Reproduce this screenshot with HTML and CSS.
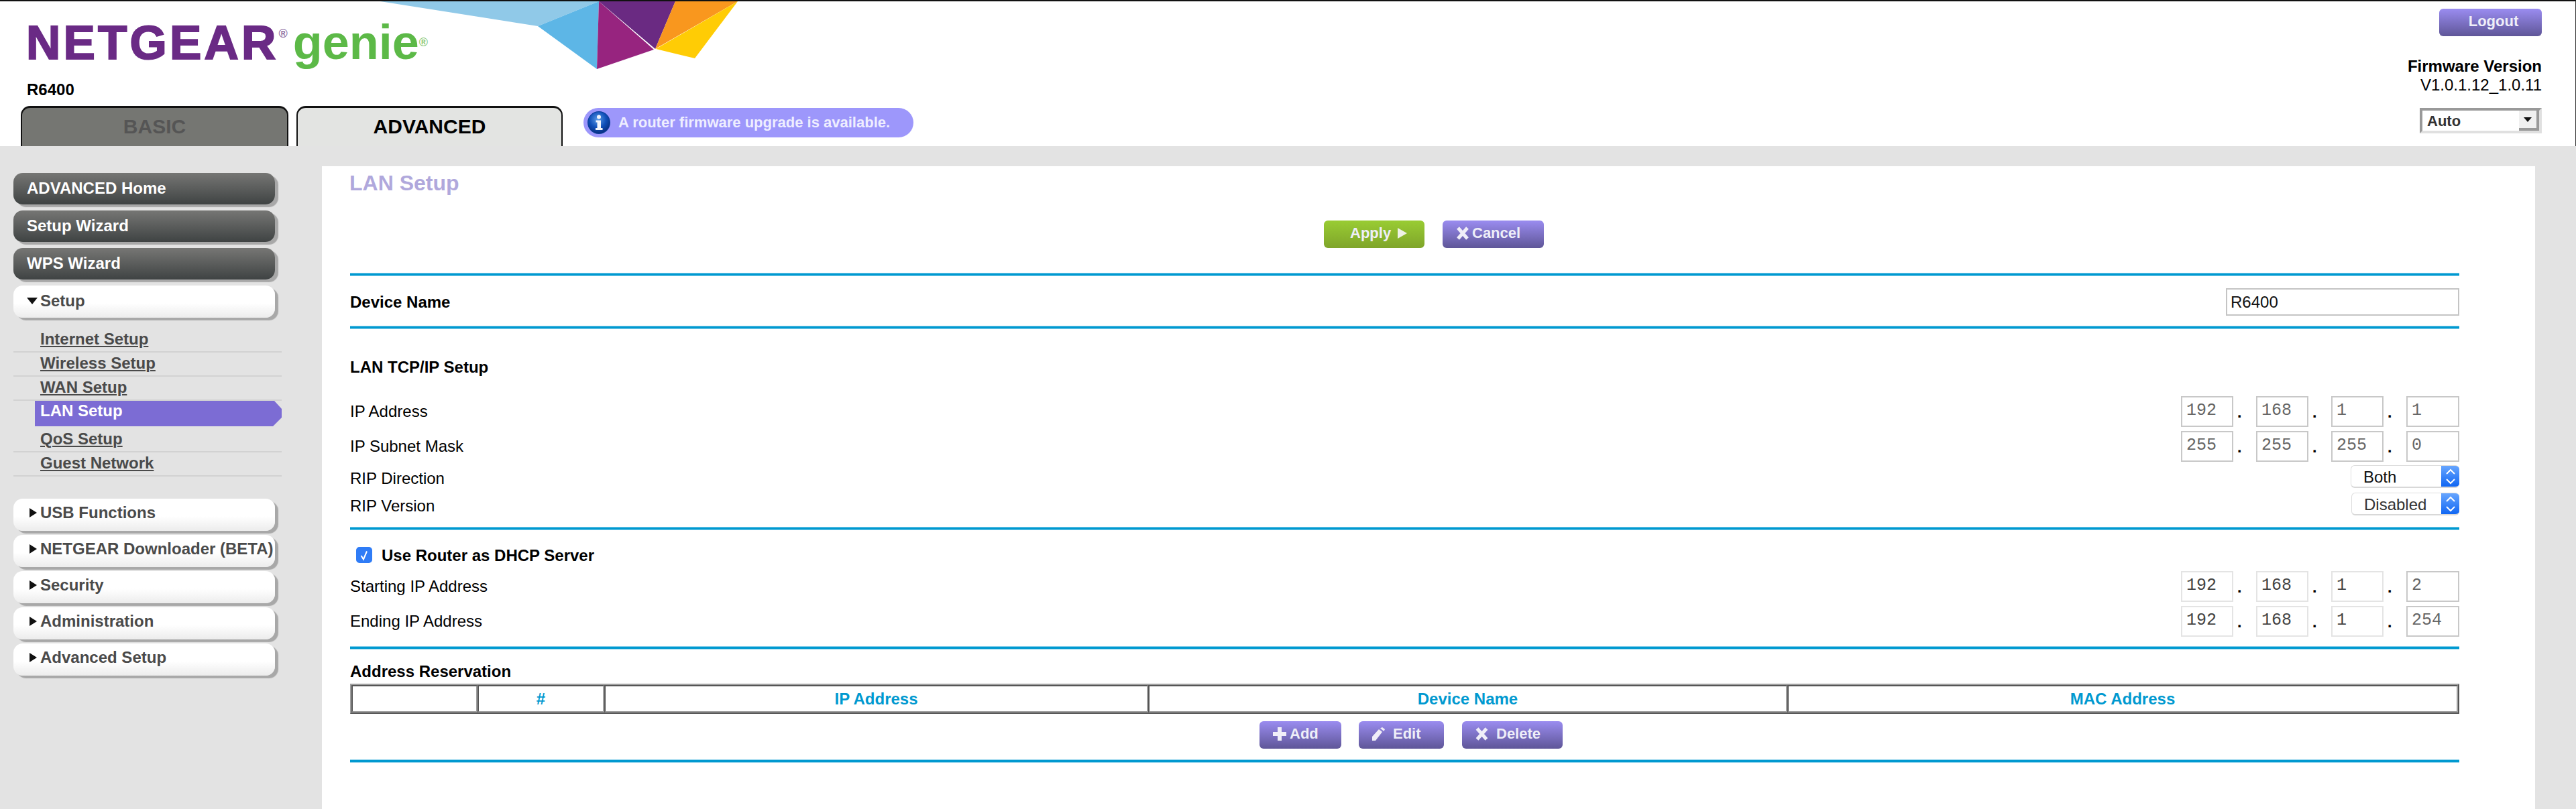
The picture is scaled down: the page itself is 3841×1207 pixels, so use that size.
FILE: index.html
```html
<!DOCTYPE html>
<html lang="en">
<head>
<meta charset="utf-8">
<title>NETGEAR genie - LAN Setup</title>
<link rel="stylesheet" href="styles.css">
</head>
<body>
<header class="header">
  <svg class="shards" width="540" height="104" viewBox="560 0 540 104" aria-hidden="true">
    <polygon fill="#90c9e8" points="567,0 893,0 802,37"/>
    <polygon fill="#5db6e6" points="893,0 802,37 890,101"/>
    <polygon fill="#97247f" points="893,0 975,72 890,101"/>
    <polygon fill="#6a2a82" points="893,0 1007,0 977,71"/>
    <polygon fill="#f9971e" points="1007,0 1100,0 977,71"/>
    <polygon fill="#ffcc05" points="1100,0 1036,85 978,71"/>
  </svg>
  <div class="header-left">
    <div class="logo">
      <span class="logo-netgear">NETGEAR</span><span class="logo-reg logo-reg-purple">®</span>
      <span class="logo-genie">genie</span><span class="logo-reg logo-reg-green">®</span>
    </div>
    <div class="model">R6400</div>
    <div class="tabs">
      <div class="tab tab-basic">BASIC</div>
      <div class="tab tab-advanced">ADVANCED</div>
      <div class="notice">
        <svg class="notice-icon" width="36" height="36" viewBox="0 0 36 36" aria-hidden="true">
          <defs>
            <radialGradient id="infoGrad" cx="45%" cy="35%" r="70%">
              <stop offset="0" stop-color="#5b9be8"/>
              <stop offset="0.55" stop-color="#0f4fb8"/>
              <stop offset="1" stop-color="#062a78"/>
            </radialGradient>
          </defs>
          <circle cx="18" cy="18" r="17" fill="#0b3f9c"/>
          <circle cx="18" cy="18" r="16" fill="url(#infoGrad)"/>
          <circle cx="18" cy="9.5" r="3" fill="#f2f5fb"/>
          <path d="M13.5 14.5h7.5v11.5h2.5v3h-10.5v-3h2.5v-8.500h-2z" fill="#f2f5fb"/>
        </svg>
        <span>A router firmware upgrade is available.</span>
      </div>
    </div>
  </div>
  <div class="header-right">
    <button class="btn btn-purple btn-logout" type="button">Logout</button>
    <div class="fw-title">Firmware Version</div>
    <div class="fw-version">V1.0.1.12_1.0.11</div>
    <div class="lang-select">
      <span>Auto</span>
      <span class="lang-arrow"><svg width="12" height="7" viewBox="0 0 12 7" aria-hidden="true"><polygon points="0,0 12,0 6,7" fill="#111"/></svg></span>
    </div>
  </div>
</header>

<div class="layout">
  <nav class="sidebar">
    <a class="nav-dark">ADVANCED Home</a>
    <a class="nav-dark">Setup Wizard</a>
    <a class="nav-dark">WPS Wizard</a>
    <a class="nav-light nav-open"><svg class="arrow-down" width="16" height="10" viewBox="0 0 16 10" aria-hidden="true"><polygon points="0,0 16,0 8,10" fill="#111"/></svg>Setup</a>
    <ul class="subnav">
      <li class="sub-item"><a>Internet Setup</a></li>
      <li class="sub-item"><a>Wireless Setup</a></li>
      <li class="sub-item"><a>WAN Setup</a></li>
      <li class="sub-active">LAN Setup</li>
      <li class="sub-item sub-after-active"><a>QoS Setup</a></li>
      <li class="sub-item"><a>Guest Network</a></li>
    </ul>
    <div class="nav-group">
      <a class="nav-light"><svg class="arrow-right" width="11" height="14" viewBox="0 0 11 14" aria-hidden="true"><polygon points="0,0 11,7 0,14" fill="#111"/></svg>USB Functions</a>
      <a class="nav-light"><svg class="arrow-right" width="11" height="14" viewBox="0 0 11 14" aria-hidden="true"><polygon points="0,0 11,7 0,14" fill="#111"/></svg>NETGEAR Downloader (BETA)</a>
      <a class="nav-light"><svg class="arrow-right" width="11" height="14" viewBox="0 0 11 14" aria-hidden="true"><polygon points="0,0 11,7 0,14" fill="#111"/></svg>Security</a>
      <a class="nav-light"><svg class="arrow-right" width="11" height="14" viewBox="0 0 11 14" aria-hidden="true"><polygon points="0,0 11,7 0,14" fill="#111"/></svg>Administration</a>
      <a class="nav-light"><svg class="arrow-right" width="11" height="14" viewBox="0 0 11 14" aria-hidden="true"><polygon points="0,0 11,7 0,14" fill="#111"/></svg>Advanced Setup</a>
    </div>
  </nav>

  <main class="panel">
    <h1 class="title">LAN Setup</h1>
    <div class="actions actions-top">
      <button class="btn btn-green btn-apply" type="button">Apply<svg width="14" height="16" viewBox="0 0 14 16" aria-hidden="true"><polygon points="0,0 14,8 0,16" fill="#eef2e6"/></svg></button>
      <button class="btn btn-purple btn-cancel" type="button"><svg width="20" height="20" viewBox="0 0 20 20" aria-hidden="true"><path d="M3 2l14 16M17 2L3 18" fill="none" stroke="#f0eef8" stroke-width="5"/></svg>Cancel</button>
    </div>
    <div class="rule rule-first"></div>
    <div class="row row-device">
      <span class="label-bold">Device Name</span>
      <input class="input-name" type="text" value="R6400">
    </div>
    <div class="rule"></div>
    <div class="label-bold section-lan">LAN TCP/IP Setup</div>
    <div class="row row-ip row-ip-first">
      <span class="label">IP Address</span>
      <div class="ip">
        <input class="octet" value="192"><span class="dot">.</span><input class="octet" value="168"><span class="dot">.</span><input class="octet" value="1"><span class="dot">.</span><input class="octet" value="1">
      </div>
    </div>
    <div class="row row-ip">
      <span class="label">IP Subnet Mask</span>
      <div class="ip">
        <input class="octet" value="255"><span class="dot">.</span><input class="octet" value="255"><span class="dot">.</span><input class="octet" value="255"><span class="dot">.</span><input class="octet" value="0">
      </div>
    </div>
    <div class="row row-select row-both">
      <span class="label">RIP Direction</span>
      <div class="stepper-select select-both">
        <span class="select-value">Both</span>
        <span class="stepper"><svg width="16" height="26" viewBox="0 0 16 26" aria-hidden="true"><path d="M2 9l6-6 6 6M2 17l6 6 6-6" fill="none" stroke="#fff" stroke-width="2"/></svg></span>
      </div>
    </div>
    <div class="row row-select row-version">
      <span class="label">RIP Version</span>
      <div class="stepper-select select-disabled">
        <span class="select-value">Disabled</span>
        <span class="stepper"><svg width="16" height="26" viewBox="0 0 16 26" aria-hidden="true"><path d="M2 9l6-6 6 6M2 17l6 6 6-6" fill="none" stroke="#fff" stroke-width="2"/></svg></span>
      </div>
    </div>
    <div class="rule rule-third"></div>
    <label class="dhcp">
      <span class="checkbox"><svg width="24" height="24" viewBox="0 0 24 24" aria-hidden="true"><path d="M7.500 13l3.500 5.500 5-12" fill="none" stroke="#fff" stroke-width="2"/></svg></span>
      <span class="label-bold">Use Router as DHCP Server</span>
    </label>
    <div class="row row-ip row-ip-start">
      <span class="label">Starting IP Address</span>
      <div class="ip">
        <input class="octet octet-off" value="192"><span class="dot">.</span><input class="octet octet-off" value="168"><span class="dot">.</span><input class="octet octet-off" value="1"><span class="dot">.</span><input class="octet" value="2">
      </div>
    </div>
    <div class="row row-ip">
      <span class="label">Ending IP Address</span>
      <div class="ip">
        <input class="octet octet-off" value="192"><span class="dot">.</span><input class="octet octet-off" value="168"><span class="dot">.</span><input class="octet octet-off" value="1"><span class="dot">.</span><input class="octet" value="254">
      </div>
    </div>
    <div class="rule rule-fourth"></div>
    <div class="label-bold section-res">Address Reservation</div>
    <table class="res-table">
      <thead>
        <tr>
          <th class="col-check"></th>
          <th class="col-num">#</th>
          <th class="col-ip">IP Address</th>
          <th class="col-name">Device Name</th>
          <th class="col-mac">MAC Address</th>
        </tr>
      </thead>
    </table>
    <div class="actions actions-table">
      <button class="btn btn-purple btn-add" type="button"><svg width="20" height="20" viewBox="0 0 20 20" aria-hidden="true"><path d="M7 0h6v7h7v6h-7v7h-6v-7h-7v-6h7z" fill="#f0eef8"/></svg>Add</button>
      <button class="btn btn-purple btn-edit" type="button"><svg width="21" height="20" viewBox="0 0 21 20" aria-hidden="true"><path d="M0 20v-6l10-11 5 4-10 13zM12 1.500l3-1.500 4 3-1.500 3z" fill="#f0eef8"/></svg>Edit</button>
      <button class="btn btn-purple btn-delete" type="button"><svg width="21" height="20" viewBox="0 0 21 20" aria-hidden="true"><path d="M3.500 2l14 16M17.500 2l-14 16" fill="none" stroke="#f0eef8" stroke-width="5"/></svg>Delete</button>
    </div>
    <div class="rule rule-last"></div>
  </main>
</div>
</body>
</html>
```

FILE: styles.css
```css
* { box-sizing: border-box; }

html, body {
  margin: 0;
  padding: 0;
}

body {
  width: 3841px;
  height: 1207px;
  overflow: hidden;
  background: #e3e3e3;
  color: #000;
  font-family: "Liberation Sans", Arial, sans-serif;
  font-size: 24px;
}

/* Header */
.header {
  position: relative;
  display: flex;
  justify-content: space-between;
  height: 218px;
  background: #fff;
  border-top: 2px solid #111;
  border-right: 1px solid #333;
}

.shards {
  position: absolute;
  left: 560px;
  top: 0;
}

.header-left {
  display: flex;
  flex-direction: column;
  padding-left: 31px;
}

.logo {
  display: flex;
  align-items: baseline;
  height: 104px;
  padding: 18px 0 0 8px;
  line-height: 86px;
  font-weight: 700;
}

.logo-netgear {
  font-size: 71px;
  letter-spacing: 4.200px;
  color: #6a2a85;
  -webkit-text-stroke: 2px #6a2a85;
}

.logo-genie {
  margin-left: 8px;
  font-size: 72px;
  font-weight: 700;
  color: #5cb947;
}

.logo-reg {
  align-self: flex-start;
  font-size: 18px;
  font-weight: 700;
  line-height: 20px;
}

.logo-reg-purple { margin-top: 20px; color: #8a6aa0; }
.logo-reg-green { margin-top: 33px; color: #8cc97a; }

.model {
  padding-left: 9px;
  margin-top: 14px;
  font-size: 24px;
  line-height: 28px;
  font-weight: 700;
}

.tabs {
  display: flex;
  align-items: flex-start;
  gap: 12px;
  margin-top: 10px;
}

.tab {
  height: 60px;
  padding-top: 13px;
  border-radius: 14px 14px 0 0;
  border-style: solid;
  border-width: 3px 2px 0;
  border-color: #111;
  text-align: center;
  font-size: 30px;
  line-height: 30px;
  font-weight: 700;
}

.tab-basic {
  width: 399px;
  background: #757672;
  color: #555;
}

.tab-advanced {
  width: 397px;
  background: #e3e4e2;
  color: #000;
}

.notice {
  display: flex;
  align-items: center;
  width: 492px;
  height: 44px;
  margin-top: 3px;
  margin-left: 19px;
  padding-left: 5px;
  border-radius: 22px;
  background: #9d97fb;
  color: #eeeeff;
  font-size: 22px;
  font-weight: 700;
}

.notice-icon { flex: none; margin-right: 11px; }

.header-right {
  display: flex;
  flex-direction: column;
  align-items: flex-end;
  padding: 11px 50px 0 0;
}

.btn-logout {
  width: 153px;
  height: 41px;
  padding: 0 0 3px 9px;
  justify-content: center;
  margin-bottom: 31px;
}

.fw-title {
  line-height: 28px;
  font-weight: 700;
}

.fw-version { line-height: 28px; }

.lang-select {
  display: flex;
  align-items: center;
  justify-content: space-between;
  width: 182px;
  height: 38px;
  margin-top: 20px;
  padding: 2px 0 0 7px;
  border-style: solid;
  border-width: 4px;
  border-color: #999 #e0e0e0 #e0e0e0 #999;
  color: #333;
  font-size: 22px;
  font-weight: 700;
}

.lang-arrow {
  display: flex;
  align-items: center;
  justify-content: center;
  width: 30px;
  height: 30px;
  margin-top: -2px;
  background: #f0f0f0;
  border-style: solid;
  border-width: 0 4px 4px 0;
  border-color: #999;
}

/* Body layout */
.layout {
  display: flex;
  align-items: flex-start;
}

.sidebar {
  width: 480px;
  flex: none;
  padding: 40px 0 0 20px;
}

.nav-dark, .nav-light {
  display: flex;
  width: 390px;
  height: 47px;
  font-size: 24px;
  font-weight: 700;
  border-radius: 14px;
  box-shadow: 5px 4px 1px #a8a8a8;
}

.nav-dark {
  align-items: center;
  margin-bottom: 9px;
  padding: 0 0 1px 20px;
  background: linear-gradient(#767674, #3f4343);
  color: #fff;
}

.nav-light {
  align-items: flex-start;
  padding: 7px 0 0 24px;
  height: 48px;
  margin-bottom: 6px;
  line-height: 28px;
  background: linear-gradient(#fff 0, #fff 55%, #ececec 100%);
  color: #4a4a4a;
}

.nav-open {
  padding: 9px 0 0 20px;
  margin-bottom: 0;
}

.arrow-down { flex: none; margin: 9px 4px 0 0; }
.arrow-right { flex: none; margin: 7px 5px 0 0; }

.subnav {
  list-style: none;
  width: 400px;
  margin: 16px 0 0;
  padding: 0;
}

.sub-item {
  height: 36px;
  padding: 2px 0 0 40px;
  border-bottom: 2px solid #d2d2d2;
  font-weight: 700;
  font-size: 24px;
  line-height: 28px;
  color: #4a4a4a;
}

.sub-item a {
  text-decoration: underline;
  text-decoration-thickness: 2px;
  text-underline-offset: 2px;
}

.sub-after-active { height: 39px; padding-top: 5px; }

.sub-active {
  height: 38px;
  margin-left: 32px;
  padding-left: 8px;
  font-weight: 700;
  line-height: 30px;
  color: #fff;
  background: #7c6cd4;
  clip-path: polygon(0 0, 357px 0, 368px 12px, 368px 25px, 355px 100%, 0 100%);
}

.nav-group { margin-top: 33px; }

/* Main panel */
.panel {
  width: 3300px;
  height: 959px;
  margin-top: 30px;
  padding: 0 113px 0 42px;
  background: #fff;
}

.title {
  margin: 0 0 0 -1px;
  height: 50px;
  font-size: 32px;
  line-height: 50px;
  font-weight: 700;
  color: #b0a8dc;
}

.actions { display: flex; }

.actions-top {
  gap: 27px;
  margin-top: 31px;
  padding-left: 1452px;
}

.actions-table {
  gap: 26px;
  margin-top: 11px;
  padding-left: 1356px;
}

.btn {
  display: flex;
  align-items: center;
  height: 41px;
  border: 0;
  border-radius: 6px;
  color: #eeeef8;
  font-family: inherit;
  font-size: 22px;
  font-weight: 700;
}

.btn-purple { background: linear-gradient(#9a8cf0, #5f5698); }
.btn-green { background: linear-gradient(#99cc33, #7fa52a); }

.btn-apply { width: 150px; padding: 0 0 3px 39px; }
.btn-apply svg { margin-left: 10px; }
.btn-cancel { width: 151px; padding: 0 0 3px 20px; }
.btn-cancel svg { margin-right: 4px; }
.btn-add { width: 122px; padding: 0 0 3px 20px; }
.btn-add svg { margin-right: 5px; }
.btn-edit { width: 127px; padding: 0 0 3px 20px; }
.btn-edit svg { margin-right: 10px; }
.btn-delete { width: 150px; margin-left: 1px; padding: 0 0 3px 19px; }
.btn-delete svg { margin-right: 11px; }

.rule {
  height: 5px;
  background: linear-gradient(#86cfea 0, #86cfea 20%, #0099d0 20%, #0099d0 80%, #86cfea 80%);
}

.rule-first { margin-top: 37px; }
.rule-third { margin-top: 17px; }
.rule-fourth { margin-top: 14px; }
.rule-last { margin-top: 16px; }

.row {
  display: flex;
  justify-content: space-between;
  align-items: center;
}

.label-bold { font-weight: 700; line-height: 28px; }
.label { line-height: 28px; }

.row-device {
  height: 74px;
  padding-top: 3px;
}

.input-name {
  width: 348px;
  height: 41px;
  padding: 0 5px;
  border: 2px solid #c4c4c4;
  font-family: inherit;
  font-size: 24px;
  color: #111;
  background: #fff;
}

.section-lan {
  height: 28px;
  margin-top: 43px;
}

.row-ip { height: 46px; margin-top: 6px; }
.row-ip-first { margin-top: 29px; }
.row-ip-start { margin-top: 12px; }

.ip { display: flex; align-items: center; }

.octet {
  width: 78px;
  height: 46px;
  padding: 0 6px 4px;
  border: 2px solid #c8c8c8;
  background: #fff;
  font-family: "Liberation Mono", "Courier New", monospace;
  font-size: 25px;
  color: #666;
}

.octet:last-child { width: 79px; }

.octet-off {
  border-color: #e4e4e4;
  color: #444;
}

.dot {
  display: flex;
  justify-content: flex-start;
  width: 34px;
  padding: 5px 0 0 2px;
  font-family: "Liberation Mono", "Courier New", monospace;
  font-weight: 700;
  font-size: 24px;
  line-height: 30px;
}

.row-select { height: 34px; }
.row-select .label { padding-top: 5px; }
.row-both { margin-top: 5px; }
.row-version { margin-top: 7px; }

.stepper-select {
  display: flex;
  align-items: stretch;
  height: 34px;
  border: 1px solid #dedede;
  border-right: 0;
  border-bottom: 2px solid #d8d8d8;
  border-radius: 6px;
  background: #fff;
  overflow: hidden;
}

.select-both { width: 162px; }
.select-disabled { width: 161px; }

.select-value {
  flex: 1;
  padding-left: 18px;
  line-height: 34px;
  font-size: 24px;
  color: #111;
}

.select-disabled .select-value { padding-left: 18px; color: #333; }

.stepper {
  display: flex;
  align-items: center;
  justify-content: center;
  width: 27px;
  flex: none;
  margin: -1px 0 -2px;
  background: linear-gradient(#6aa8ff, #0a62f2);
}

.dhcp {
  display: flex;
  align-items: center;
  height: 24px;
  margin-top: 25px;
  padding-left: 9px;
}

.dhcp .label-bold { padding-top: 1px; }

.checkbox {
  display: block;
  width: 24px;
  height: 24px;
  margin-right: 14px;
  border-radius: 5px;
  background: #2f7cf6;
}

.checkbox svg { display: block; }

.section-res {
  height: 30px;
  margin-top: 18px;
  line-height: 30px;
}

.res-table {
  width: 3145px;
  height: 45px;
  margin-top: 3px;
  table-layout: fixed;
  border-collapse: separate;
  border-spacing: 0;
  border-style: solid;
  border-width: 2px;
  border-color: #a0a0a0 #555 #555 #a0a0a0;
}

.res-table th {
  padding: 0;
  border-style: solid;
  border-width: 2px;
  border-color: #555 #a0a0a0 #a0a0a0 #555;
  color: #0099d0;
  font-size: 24px;
  font-weight: 700;
  text-align: center;
}

.col-check { width: 188px; }
.col-num { width: 189px; }
.col-ip { width: 811px; }
.col-name { width: 953px; }
.col-mac { width: 1000px; }
```
